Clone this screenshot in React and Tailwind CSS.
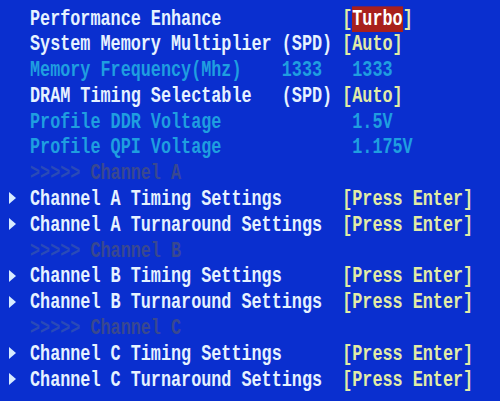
const W = 'text-[#e6f2ff]'
const C = 'text-[#1f9ee0]'
const Y = 'text-[#e2eca6]'

function Arrow() {
  return (
    <svg width="7" height="12" viewBox="0 0 7 12" className="block -translate-y-[1px]">
      <path d="M0 0 L7 6 L0 12 Z" fill="#d8ecff" />
    </svg>
  )
}

function Row({ arrow, children }) {
  return (
    <div className="flex h-[25.8px] items-center">
      <div className="flex w-[30px] justify-start pl-[9px]">{arrow && <Arrow />}</div>
      <div className="inline-block origin-center translate-y-[1px] scale-y-[1.35] whitespace-pre">{children}</div>
    </div>
  )
}

function Header({ ch }) {
  return (
    <Row>
      <span className="text-[#2a4ab8]">{'>>>>> '}</span>
      <span className="text-[#394890]">Channel {ch}</span>
    </Row>
  )
}

const Enter = () => <span className={Y}>[Press Enter]</span>

export default function App() {
  const channels = ['A', 'B', 'C']
  return (
    <div
      className="h-[401px] w-[500px] overflow-hidden bg-[#0a2fcf] pt-[6px] text-[16.8px] font-bold leading-none"
      style={{ fontFamily: '"Liberation Mono", "DejaVu Sans Mono", monospace' }}
    >
      <Row>
        <span className={W}>{'Performance Enhance            '}</span>
        <span className={Y}>[</span>
        <span className="bg-[#a8201c] text-white">Turbo</span>
        <span className={Y}>]</span>
      </Row>
      <Row>
        <span className={W}>{'System Memory Multiplier (SPD) '}</span>
        <span className={Y}>[Auto]</span>
      </Row>
      <Row>
        <span className={C}>{'Memory Frequency(Mhz)    1333   1333'}</span>
      </Row>
      <Row>
        <span className={W}>{'DRAM Timing Selectable   (SPD) '}</span>
        <span className={Y}>[Auto]</span>
      </Row>
      <Row>
        <span className={C}>{'Profile DDR Voltage             1.5V'}</span>
      </Row>
      <Row>
        <span className={C}>{'Profile QPI Voltage             1.175V'}</span>
      </Row>
      {channels.map((ch) => (
        <div key={ch}>
          <Header ch={ch} />
          <Row arrow>
            <span className={W}>{`Channel ${ch} Timing Settings      `}</span>
            <Enter />
          </Row>
          <Row arrow>
            <span className={W}>{`Channel ${ch} Turnaround Settings  `}</span>
            <Enter />
          </Row>
        </div>
      ))}
    </div>
  )
}
